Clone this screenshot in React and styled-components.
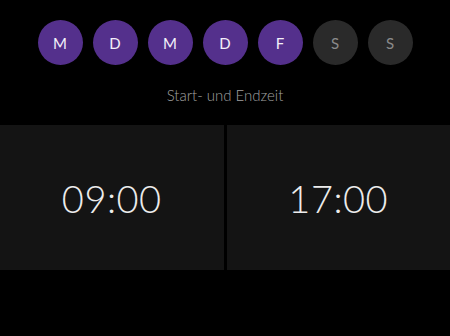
import React from "react";
import styled, { createGlobalStyle } from "styled-components";

const GlobalStyle = createGlobalStyle`
  html, body {
    margin: 0;
    padding: 0;
    background: #000;
  }
  body {
    font-family: "Lato", "Open Sans", sans-serif;
  }
`;

const Screen = styled.div`
  width: 450px;
  height: 336px;
  background: #000;
  display: flex;
  flex-direction: column;
`;

const DayRow = styled.div`
  display: flex;
  justify-content: center;
  gap: 10px;
  padding-top: 20px;
`;

const DayButton = styled.div`
  width: 45px;
  height: 45px;
  border-radius: 50%;
  display: flex;
  align-items: center;
  justify-content: center;
  font-size: 15px;
  font-weight: 400;
  background: ${props => (props.active ? "#54308c" : "#2a2a2a")};
  color: ${props => (props.active ? "#f4f0fa" : "#8a8a8a")};
`;

const Label = styled.div`
  margin-top: 21px;
  height: 18px;
  line-height: 18px;
  text-align: center;
  font-size: 15px;
  font-weight: 300;
  color: #a0a0a0;
`;

const TimeRow = styled.div`
  margin-top: 21px;
  display: flex;
  gap: 3px;
  height: 145px;
`;

const TimePanel = styled.div`
  flex: 1;
  background: #141414;
  display: flex;
  align-items: center;
  justify-content: center;
  color: #ececec;
  font-size: 38px;
  font-weight: 300;
  letter-spacing: 0.5px;
`;

const days = [
  { label: "M", active: true },
  { label: "D", active: true },
  { label: "M", active: true },
  { label: "D", active: true },
  { label: "F", active: true },
  { label: "S", active: false },
  { label: "S", active: false },
];

export default function App() {
  return (
    <>
      <GlobalStyle />
      <Screen>
        <DayRow>
          {days.map((d, i) => (
            <DayButton key={i} active={d.active}>
              {d.label}
            </DayButton>
          ))}
        </DayRow>
        <Label>Start- und Endzeit</Label>
        <TimeRow>
          <TimePanel>09:00</TimePanel>
          <TimePanel>17:00</TimePanel>
        </TimeRow>
      </Screen>
    </>
  );
}
